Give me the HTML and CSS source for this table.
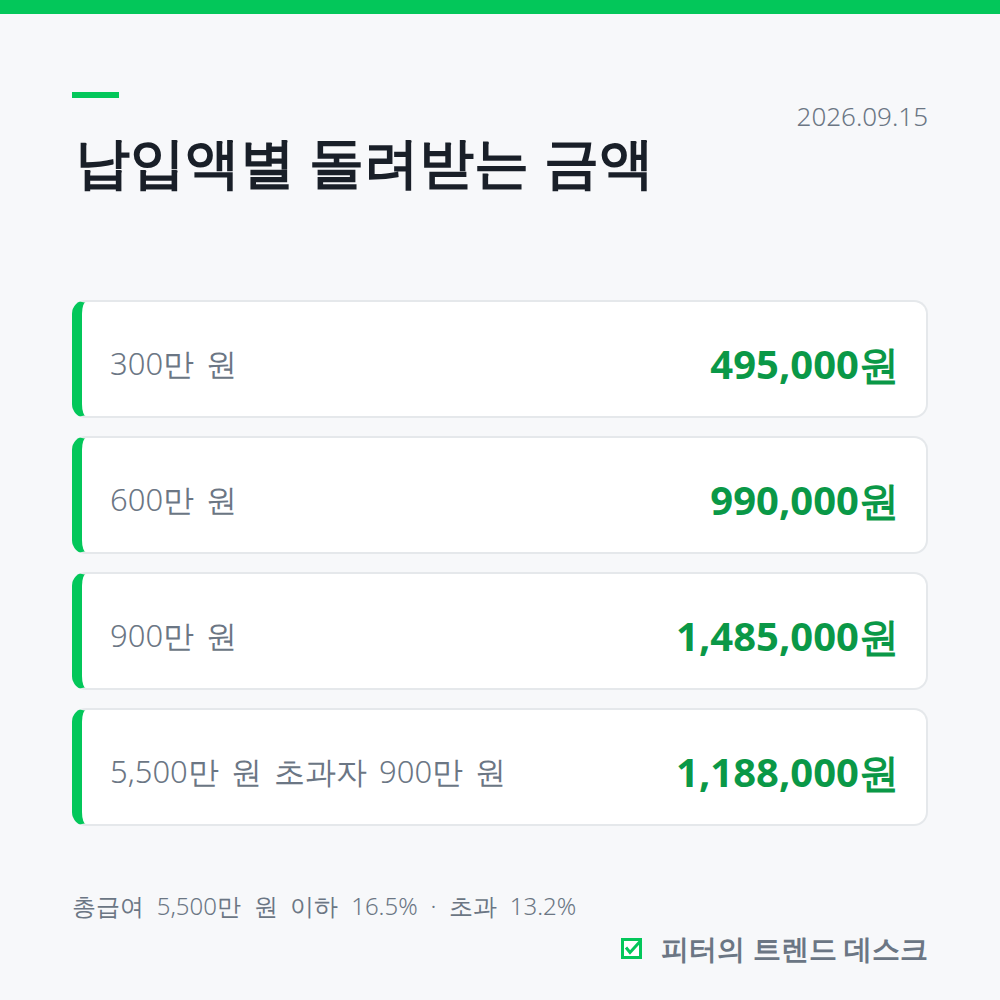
FILE: index.html
```html
<!DOCTYPE html>
<html lang="ko">
<head>
    <meta charset="UTF-8">
    <meta name="viewport" content="width=device-width, initial-scale=1.0">
    <title>납입액별 돌려받는 금액</title>
    <link rel="stylesheet" href="styles.css">
</head>
<body>
    <div class="top-bar"></div>
    <div class="page">
        <div class="header">
            <div class="title-block">
                <div class="accent"></div>
                <h1>납입액별 돌려받는 금액</h1>
            </div>
            <div class="date">2026.09.15</div>
        </div>

        <div class="cards">
            <div class="card">
                <span class="label">300만 원</span>
                <span class="value">495,000원</span>
            </div>
            <div class="card">
                <span class="label">600만 원</span>
                <span class="value">990,000원</span>
            </div>
            <div class="card">
                <span class="label">900만 원</span>
                <span class="value">1,485,000원</span>
            </div>
            <div class="card">
                <span class="label">5,500만 원 초과자 900만 원</span>
                <span class="value">1,188,000원</span>
            </div>
        </div>

        <p class="note">총급여 5,500만 원 이하 16.5% · 초과 13.2%</p>
        <div class="brand">
            <svg class="check" width="21" height="21" viewBox="0 0 21 21">
                <rect x="1.5" y="1.5" width="18" height="18" fill="#fff" stroke="#03c75a" stroke-width="3"/>
                <path d="M5 9.5 L9 14.5 L19 3.5" fill="none" stroke="#03c75a" stroke-width="3"/>
            </svg>
            <span>피터의 트렌드 데스크</span>
        </div>
    </div>
</body>
</html>
```

FILE: styles.css
```css
body {
    margin: 0;
    background-color: #f7f8fa;
    font-family: "Noto Sans", sans-serif;
    width: 1000px;
    height: 1000px;
    overflow: hidden;
}
.top-bar {
    height: 14px;
    background-color: #03c75a;
}
.page {
    padding: 78px 72px 0 72px;
}
.header {
    display: flex;
    justify-content: space-between;
    align-items: flex-start;
    height: 208px;
}
.accent {
    width: 47px;
    height: 6px;
    background-color: #03c75a;
}
h1 {
    margin: 27px 0 0 3px;
    font-size: 55px;
    font-weight: 700;
    line-height: 72px;
    color: #191f28;
}
.date {
    margin-top: 6px;
    font-size: 26px;
    font-weight: 300;
    line-height: 36px;
    color: #6b7684;
}
.cards {
    display: flex;
    flex-direction: column;
    gap: 18px;
}
.card {
    display: flex;
    justify-content: space-between;
    align-items: center;
    height: 104px;
    background-color: #fff;
    border: 2px solid #e5e8eb;
    border-left: 10px solid #03c75a;
    border-radius: 14px;
    padding: 10px 27px 0 28px;
}
.label {
    font-size: 31px;
    font-weight: 300;
    color: #6b7684;
    word-spacing: 4px;
}
.value {
    font-size: 40px;
    font-weight: 700;
    color: #0a9847;
}
.note {
    margin: 64px 0 0 0;
    font-size: 24px;
    font-weight: 300;
    line-height: 32px;
    color: #6b7684;
    word-spacing: 6.5px;
}
.brand {
    display: flex;
    justify-content: flex-end;
    align-items: center;
    gap: 19px;
    margin-top: 6px;
    font-size: 28px;
    line-height: 40px;
    font-weight: 700;
    color: #6b7684;
}
.check {
    display: block;
}
```
